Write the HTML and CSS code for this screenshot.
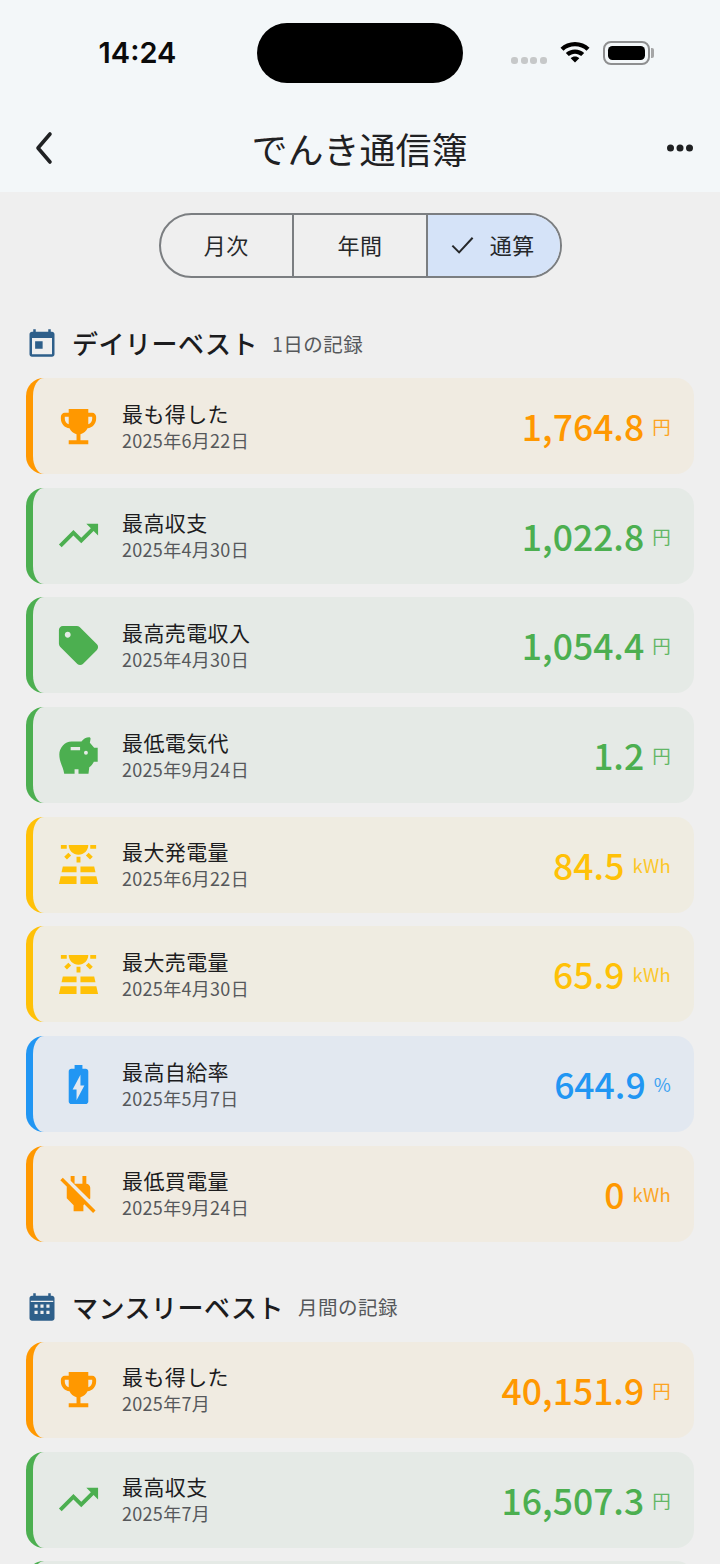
FILE: index.html
```html
<!DOCTYPE html>
<html lang="ja">
<head>
<meta charset="utf-8">
<title>でんき通信簿</title>
<link rel="stylesheet" href="styles.css">
</head>
<body>
<svg class="defs" aria-hidden="true">
  <defs>
    <symbol id="i-trophy" viewBox="0 0 24 24"><path d="M19 5h-2V3H7v2H5c-1.1 0-2 .9-2 2v1c0 2.55 1.92 4.63 4.39 4.94.63 1.5 1.98 2.63 3.61 2.96V19H7v2h10v-2h-4v-3.1c1.63-.33 2.98-1.46 3.61-2.96C19.08 12.63 21 10.55 21 8V7c0-1.1-.9-2-2-2zM5 8V7h2v3.82C5.84 10.4 5 9.3 5 8zm14 0c0 1.3-.84 2.4-2 2.82V7h2v1z"/></symbol>
    <symbol id="i-trend" viewBox="0 0 24 24"><path d="M16 6l2.29 2.29-4.88 4.88-4-4L2 16.59 3.41 18l6-6 4 4 6.3-6.29L22 12V6z"/></symbol>
    <symbol id="i-tag" viewBox="0 0 24 24"><path d="M21.41 11.41l-8.83-8.83C12.21 2.21 11.7 2 11.17 2H4c-1.1 0-2 .9-2 2v7.17c0 .53.21 1.04.59 1.41l8.83 8.83c.78.78 2.05.78 2.83 0l7.17-7.17c.78-.78.78-2.04-.01-2.83zM6.5 8C5.67 8 5 7.33 5 6.5S5.67 5 6.5 5 8 5.67 8 6.5 7.33 8 6.5 8z"/></symbol>
    <symbol id="i-pig" viewBox="0 0 24 24"><path fill-rule="evenodd" d="M2.200 11.500C2.200 8 5 4.800 8.500 4.800h5C14.500 3.500 16 2.700 17.400 2.700c.6 0 .9.5.7 1.100l-.3 1.700 2.200 2.500h1.800v7.200h-2C19.300 16.400 18.500 17.300 17.500 18l-.4 3.350H12V19h-2v2.350H4.700C4.300 18 2.200 15.500 2.200 11.500zM8 7.600v1.700h4.800V7.600zM15.800 9.600a1 1 0 1 0 0 2 1 1 0 0 0 0-2z"/></symbol>
    <symbol id="i-solar" viewBox="0 0 24 24"><path d="M3.33 16H11v-3H4l-.67 3zM13 16h7.67L20 13h-7v3zm8.11 2H13v4h9l-.89-4zM2 22h9v-4H2.89L2 22zm9-14h2v3h-2zM15.77 7.35l1.41-1.41 2.12 2.12-1.41 1.41zM4.7 8.06l2.12-2.12 1.41 1.41-2.12 2.12zM3 2h3v2H3zM18 2h3v2h-3zM12 7c2.76 0 5-2.24 5-5H7c0 2.76 2.24 5 5 5z"/></symbol>
    <symbol id="i-battery" viewBox="0 0 24 24"><path d="M15.67 4H14V2h-4v2H8.33C7.6 4 7 4.6 7 5.33v15.33C7 21.4 7.6 22 8.33 22h7.33c.74 0 1.34-.6 1.34-1.33V5.33C17 4.6 16.4 4 15.67 4zM11 20v-5.5H9L13 7v5.5h2L11 20z"/></symbol>
    <symbol id="i-plug" viewBox="0 0 24 24"><path d="M18 14.49V9c0-1-1.01-2.01-2-2V3h-2v4h-4V3H8v2.48l9.51 9.5.49-.49zm-1.76 1.77L7.2 7.2l-.01.01L3.98 4 2.71 5.25l3.36 3.36C6.04 8.74 6 8.87 6 9v5.48L9.5 18v3h5v-3l.48-.48L19.45 22l1.26-1.28-4.47-4.46z"/></symbol>
  </defs>
</svg>
<main class="phone">
  <header class="top">
    <div class="status">
      <span class="time">14:24</span>
      <span class="island"></span>
      <div class="status-icons">
        <span class="signal"><i></i><i></i><i></i><i></i></span>
        <svg class="wifi" viewBox="0 0 32 24"><path d="M16 3C10.300 3 5.200 5.200 1.500 8.800l3 3C7.400 9 11.500 7.300 16 7.300s8.600 1.700 11.500 4.500l3-3C26.800 5.200 21.700 3 16 3z"/><path d="M16 10.500c-3.600 0-6.800 1.400-9.200 3.600l3 3c1.600-1.500 3.800-2.400 6.200-2.400s4.600.9 6.200 2.400l3-3c-2.400-2.200-5.600-3.600-9.200-3.600z"/><path d="M16 17.500c-1.700 0-3.200.6-4.300 1.700l4.300 4.300 4.300-4.300c-1.100-1.100-2.600-1.700-4.300-1.700z"/></svg>
        <span class="battery"><span class="battery-fill"></span></span>
      </div>
    </div>
    <div class="appbar">
      <svg class="back" viewBox="0 0 24 36"><path d="M17 4 5 18l12 14"/></svg>
      <h1 class="app-title">でんき通信簿</h1>
      <svg class="more" viewBox="0 0 28 8"><circle cx="4.500" cy="4" r="3.500"/><circle cx="14" cy="4" r="3.500"/><circle cx="23.500" cy="4" r="3.500"/></svg>
    </div>
  </header>

  <div class="segments">
    <div class="segment">月次</div>
    <div class="segment">年間</div>
    <div class="segment segment-on">
      <svg class="check" viewBox="0 0 24 24"><path d="M3 13l6 6L21 6"/></svg>通算
    </div>
  </div>

  <section class="section">
    <div class="heading">
      <svg class="heading-icon" viewBox="0 0 24 24"><path fill-rule="evenodd" d="M20 3h-1V1h-2v2H7V1H5v2H4C2.900 3 2 3.900 2 5v16c0 1.100.9 2 2 2h16c1.100 0 2-.9 2-2V5c0-1.100-.9-2-2-2zm0 18H4V8h16v13zM6.500 10.500h6v6h-6z"/></svg>
      <h2 class="heading-title">デイリーベスト</h2>
      <span class="heading-sub">1日の記録</span>
    </div>
    <div class="cards">
      <article class="card orange"><svg class="icon"><use href="#i-trophy"/></svg><div class="text"><div class="label">最も得した</div><div class="date">2025年6月22日</div></div><div class="value">1,764.8</div><div class="unit">円</div></article>
      <article class="card green"><svg class="icon"><use href="#i-trend"/></svg><div class="text"><div class="label">最高収支</div><div class="date">2025年4月30日</div></div><div class="value">1,022.8</div><div class="unit">円</div></article>
      <article class="card green"><svg class="icon"><use href="#i-tag"/></svg><div class="text"><div class="label">最高売電収入</div><div class="date">2025年4月30日</div></div><div class="value">1,054.4</div><div class="unit">円</div></article>
      <article class="card green"><svg class="icon"><use href="#i-pig"/></svg><div class="text"><div class="label">最低電気代</div><div class="date">2025年9月24日</div></div><div class="value">1.2</div><div class="unit">円</div></article>
      <article class="card yellow"><svg class="icon"><use href="#i-solar"/></svg><div class="text"><div class="label">最大発電量</div><div class="date">2025年6月22日</div></div><div class="value">84.5</div><div class="unit">kWh</div></article>
      <article class="card yellow"><svg class="icon"><use href="#i-solar"/></svg><div class="text"><div class="label">最大売電量</div><div class="date">2025年4月30日</div></div><div class="value">65.9</div><div class="unit">kWh</div></article>
      <article class="card blue"><svg class="icon"><use href="#i-battery"/></svg><div class="text"><div class="label">最高自給率</div><div class="date">2025年5月7日</div></div><div class="value">644.9</div><div class="unit">%</div></article>
      <article class="card orange"><svg class="icon"><use href="#i-plug"/></svg><div class="text"><div class="label">最低買電量</div><div class="date">2025年9月24日</div></div><div class="value">0</div><div class="unit">kWh</div></article>
    </div>
  </section>

  <section class="section">
    <div class="heading">
      <svg class="heading-icon" viewBox="0 0 24 24"><path fill-rule="evenodd" d="M20 3h-1V1h-2v2H7V1H5v2H4C2.900 3 2 3.900 2 5v16c0 1.100.9 2 2 2h16c1.100 0 2-.9 2-2V5c0-1.100-.9-2-2-2zM6 10h2.500v2.500H6zm4.750 0h2.500v2.500h-2.500zm4.750 0H18v2.500h-2.500zM6 15h2.500v2.500H6zm4.750 0h2.500v2.500h-2.500zm4.750 0H18v2.500h-2.500z"/><path class="heading-line" d="M3 7h18v1H3z"/></svg>
      <h2 class="heading-title">マンスリーベスト</h2>
      <span class="heading-sub">月間の記録</span>
    </div>
    <div class="cards">
      <article class="card orange"><svg class="icon"><use href="#i-trophy"/></svg><div class="text"><div class="label">最も得した</div><div class="date">2025年7月</div></div><div class="value">40,151.9</div><div class="unit">円</div></article>
      <article class="card green"><svg class="icon"><use href="#i-trend"/></svg><div class="text"><div class="label">最高収支</div><div class="date">2025年7月</div></div><div class="value">16,507.3</div><div class="unit">円</div></article>
      <article class="card green"></article>
    </div>
  </section>
</main>
</body>
</html>
```
FILE: styles.css
```css
* { box-sizing: border-box; }
html, body { margin: 0; padding: 0; }
body {
  width: 720px;
  height: 1564px;
  overflow: hidden;
  background: #efefef;
  color: #1c1c1e;
  font-family: "Noto Sans CJK JP", "Noto Sans", sans-serif;
}
.defs { display: none; }
.phone { width: 720px; height: 1564px; overflow: hidden; background: #efefef; }

.top { height: 192px; background: #f3f7f9; }
.status {
  display: grid;
  grid-template-columns: 1fr 206px 1fr;
  height: 83px;
  padding-top: 23px;
}
.time {
  font-family: Inter, Roboto, sans-serif;
  font-size: 29px;
  font-weight: 600;
  line-height: 60px;
  text-align: center;
  color: #0b0b0b;
  padding-left: 18px;
}
.island { display: block; height: 60px; border-radius: 30px; background: #000; }
.status-icons {
  display: flex;
  align-items: center;
  height: 60px;
  padding-left: 48px;
}
.signal { display: flex; gap: 2.500px; margin-top: 14px; }
.signal i { display: block; width: 7px; height: 7px; border-radius: 3px; background: #c6c8c9; }
.wifi { width: 32px; height: 24px; margin-left: 12px; margin-top: -4px; fill: #000; }
.battery {
  position: relative;
  display: block;
  width: 47px;
  height: 24px;
  margin-left: 12px;
  margin-top: -1px;
  padding: 3px;
  border: 2px solid #8e8f90;
  border-radius: 8px;
}
.battery::after {
  content: "";
  position: absolute;
  top: 5px;
  right: -6px;
  width: 3px;
  height: 10px;
  border-radius: 0 2px 2px 0;
  background: #a5a6a7;
}
.battery-fill { display: block; width: 100%; height: 100%; border-radius: 4.500px; background: #000; }

.appbar {
  display: flex;
  align-items: center;
  justify-content: space-between;
  height: 109px;
  padding: 20px 26px 0 33px;
}
.back { width: 24px; height: 36px; margin-right: -4px; fill: none; stroke: #1f2123; stroke-width: 3.600; stroke-linecap: round; stroke-linejoin: round; }
.app-title {
  margin: 0;
  font-size: 36px;
  font-weight: 400;
  line-height: 48px;
  color: #1f2123;
}
.more { width: 28px; height: 8px; fill: #1f2123; }

.segments {
  display: flex;
  width: 403px;
  height: 65px;
  margin: 21px auto 0;
  border: 2px solid #7b7e81;
  border-radius: 33px;
  overflow: hidden;
}
.segment {
  display: flex;
  flex: 1 1 0;
  align-items: center;
  justify-content: center;
  padding-bottom: 3px;
  font-size: 22px;
  letter-spacing: 0.500px;
  color: #26282a;
}
.segment + .segment { border-left: 2px solid #7b7e81; }
.segment-on { background: #d5e3f8; }
.check { width: 27px; height: 27px; margin-right: 14px; margin-left: -4px; fill: none; stroke: #26282a; stroke-width: 1.800; }

.section { padding: 0 26px; }
.section + .section { margin-top: 40px; }
.segments + .section { margin-top: 40px; }
.heading {
  display: flex;
  align-items: center;
  height: 50px;
  margin-bottom: 10px;
}
.heading-icon { width: 30px; height: 30px; margin-left: 1px; fill: #2e5f8a; flex: none; }
.heading-line { fill: #efefef; }
.heading-title {
  margin: 0 0 0 15px;
  font-size: 26px;
  font-weight: 500;
  line-height: 36px;
  letter-spacing: 0.500px;
  color: #1c1c1e;
}
.heading-sub {
  margin-left: 14px;
  font-size: 19.500px;
  letter-spacing: 0.500px;
  color: #56585b;
}

.cards { display: flex; flex-direction: column; gap: 13.700px; }
.card {
  display: flex;
  align-items: center;
  flex: none;
  height: 96px;
  padding: 0 23px 0 22px;
  border-left: 7px solid;
  border-radius: 18px;
}
.orange { border-color: #ff9800; background: #f0ebe1; color: #ff9800; }
.green { border-color: #4caf50; background: #e5eae6; color: #4caf50; }
.yellow { border-color: #ffc107; background: #efece1; color: #ffc107; }
.blue { border-color: #2196f3; background: #e2e8f0; color: #2196f3; }

.icon { width: 47px; height: 47px; flex: none; fill: currentColor; }
.text { flex: 1 1 auto; margin-left: 20px; margin-top: -1px; }
.label {
  font-size: 21px;
  line-height: 28px;
  letter-spacing: 0.400px;
  color: #1c1c1e;
}
.date {
  font-size: 18px;
  line-height: 26px;
  letter-spacing: 0.300px;
  color: #56585b;
}
.value {
  font-size: 35.500px;
  font-weight: 500;
  line-height: 48px;
  white-space: nowrap;
}
.unit {
  margin-left: 8px;
  font-size: 18.500px;
  letter-spacing: 0.300px;
  line-height: 48px;
  opacity: 0.85;
}
```
